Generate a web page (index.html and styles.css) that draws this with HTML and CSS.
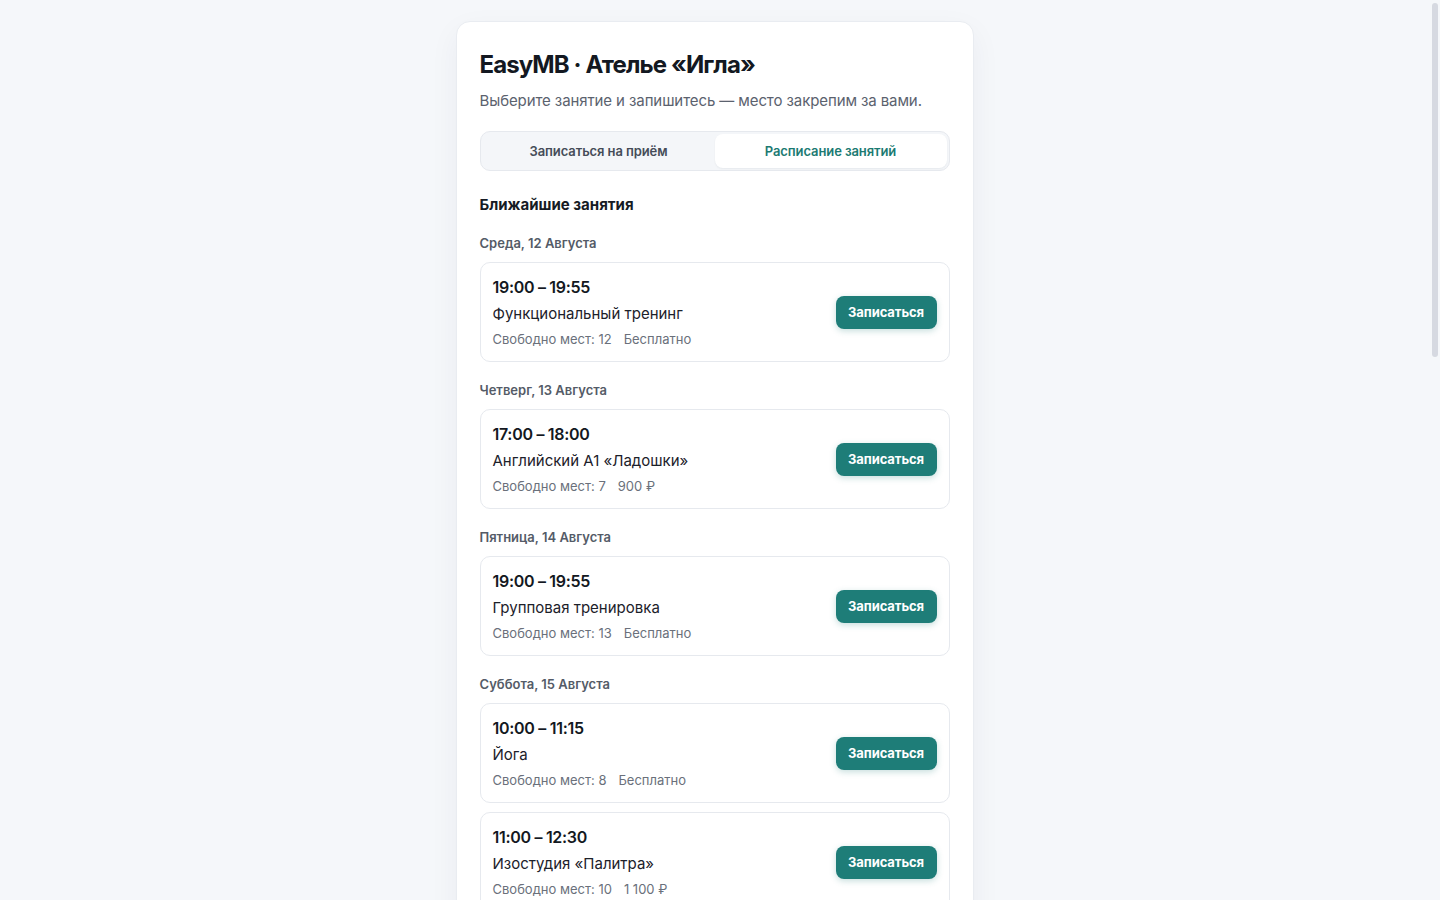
FILE: index.html
```html
<!DOCTYPE html>
<html lang="ru">
<head>
<meta charset="utf-8">
<title>EasyMB · Ателье «Игла»</title>
<link rel="stylesheet" href="styles.css">
</head>
<body>
<div class="page">
<main class="card">
  <h1 class="title">EasyMB · Ателье «Игла»</h1>
  <p class="subtitle">Выберите занятие и запишитесь — место закрепим за вами.</p>
  <div class="tabs">
    <button class="tab">Записаться на приём</button>
    <button class="tab active">Расписание занятий</button>
  </div>
  <h2 class="section">Ближайшие занятия</h2>
  <div class="days">
    <section class="day">
      <div class="day-label">Среда, 12 Августа</div>
      <div class="item">
        <div class="info">
          <div class="time">19:00 – 19:55</div>
          <div class="name">Функциональный тренинг</div>
          <div class="meta"><span>Свободно мест: 12</span><span>Бесплатно</span></div>
        </div>
        <button class="btn">Записаться</button>
      </div>
    </section>
    <section class="day">
      <div class="day-label">Четверг, 13 Августа</div>
      <div class="item">
        <div class="info">
          <div class="time">17:00 – 18:00</div>
          <div class="name">Английский A1 «Ладошки»</div>
          <div class="meta"><span>Свободно мест: 7</span><span>900 ₽</span></div>
        </div>
        <button class="btn">Записаться</button>
      </div>
    </section>
    <section class="day">
      <div class="day-label">Пятница, 14 Августа</div>
      <div class="item">
        <div class="info">
          <div class="time">19:00 – 19:55</div>
          <div class="name">Групповая тренировка</div>
          <div class="meta"><span>Свободно мест: 13</span><span>Бесплатно</span></div>
        </div>
        <button class="btn">Записаться</button>
      </div>
    </section>
    <section class="day">
      <div class="day-label">Суббота, 15 Августа</div>
      <div class="item">
        <div class="info">
          <div class="time">10:00 – 11:15</div>
          <div class="name">Йога</div>
          <div class="meta"><span>Свободно мест: 8</span><span>Бесплатно</span></div>
        </div>
        <button class="btn">Записаться</button>
      </div>
      <div class="item">
        <div class="info">
          <div class="time">11:00 – 12:30</div>
          <div class="name">Изостудия «Палитра»</div>
          <div class="meta"><span>Свободно мест: 10</span><span>1 100 ₽</span></div>
        </div>
        <button class="btn">Записаться</button>
      </div>
    </section>
  </div>
</main>
</div>
<div class="scroll-thumb" aria-hidden="true"></div>
</body>
</html>
```
FILE: styles.css
```css
html,
body {
  margin: 0;
  background: #f5f7fa;
}
body {
  font-family: Inter, "Noto Sans", sans-serif;
  color: #161b24;
}
.page {
  padding: 21px 11px 24px 0;
}
.scroll-thumb {
  position: fixed;
  top: 3px;
  right: 2px;
  width: 6px;
  height: 354px;
  border-radius: 3px;
  background: #d6d9e1;
}
.card {
  width: 470px;
  margin: 0 auto;
  background: #ffffff;
  border: 1px solid #e9ecf1;
  border-radius: 14px;
  padding: 28px 23px 24px;
  box-shadow: 0 10px 30px rgba(30, 40, 70, 0.05);
}
.title {
  margin: 0;
  font-size: 24px;
  line-height: 30px;
  font-weight: 700;
  letter-spacing: -0.9px;
  color: #131821;
}
.subtitle {
  margin: 10px 0 0;
  font-size: 15px;
  line-height: 22px;
  letter-spacing: -0.1px;
  color: #5b626e;
}
.tabs {
  margin-top: 19px;
  display: grid;
  grid-template-columns: 1fr 1fr;
  padding: 2px;
  height: 34px;
  background: #f4f6f9;
  border: 1px solid #e6e9ee;
  border-radius: 10px;
}
.tab {
  border: 0;
  background: transparent;
  font-family: inherit;
  font-size: 13px;
  font-weight: 600;
  letter-spacing: -0.1px;
  color: #454c58;
  border-radius: 8px;
  cursor: pointer;
}
.tab.active {
  background: #ffffff;
  color: #1b7a72;
  box-shadow: 0 1px 2px rgba(20, 30, 50, 0.06);
}
.section {
  margin: 24px 0 0;
  font-size: 15px;
  line-height: 20px;
  font-weight: 700;
  color: #161b24;
}
.days {
  margin-top: 19px;
  display: flex;
  flex-direction: column;
  gap: 19px;
}
.day {
  display: flex;
  flex-direction: column;
  gap: 9px;
}
.day-label {
  font-size: 13px;
  line-height: 18px;
  font-weight: 600;
  color: #545b67;
  margin-bottom: 1px;
}
.item {
  display: flex;
  align-items: center;
  justify-content: space-between;
  padding: 13px 12px;
  border: 1px solid #e6e9ee;
  border-radius: 10px;
  background: #ffffff;
}
.info {
  display: flex;
  flex-direction: column;
  gap: 5px;
}
.time {
  font-size: 16px;
  line-height: 22px;
  font-weight: 600;
  letter-spacing: -0.3px;
  color: #131821;
}
.name {
  font-size: 15px;
  line-height: 22px;
  color: #1c212a;
}
.meta {
  display: flex;
  gap: 12px;
  font-size: 13px;
  line-height: 18px;
  color: #6a707b;
}
.btn {
  width: 101px;
  height: 33px;
  border: 0;
  border-radius: 8px;
  background: #1e7d78;
  color: #ffffff;
  font-family: inherit;
  font-size: 13px;
  font-weight: 700;
  letter-spacing: -0.1px;
  box-shadow: 0 2px 6px rgba(30, 125, 120, 0.25);
  cursor: pointer;
}
```
